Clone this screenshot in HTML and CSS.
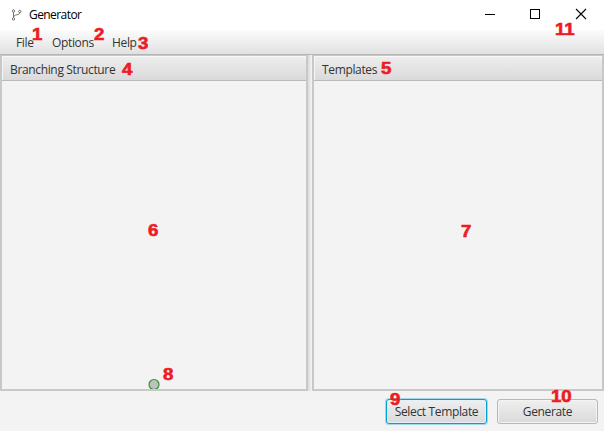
FILE: index.html
```html
<!DOCTYPE html>
<html lang="en">
<head>
<meta charset="utf-8">
<title>Generator</title>
<link rel="stylesheet" href="styles.css">
</head>
<body>
<div class="window">
  <header class="titlebar">
    <svg class="app-icon" width="12" height="12" viewBox="0 0 12 12"><g fill="none" stroke="#666" stroke-width=".9"><circle cx="2.500" cy="2" r="1.200"/><circle cx="2.500" cy="10" r="1.200"/><circle cx="8.800" cy="2.500" r="1.200"/><path d="M2.500 3.200v5.600M8.800 3.700C8.800 6.500 3 5 2.700 8"/></g></svg>
    <span class="title">Generator</span>
    <div class="controls">
      <svg width="46" height="29" viewBox="0 0 46 29"><path d="M18 14.500h10" stroke="#000"/></svg>
      <svg width="46" height="29" viewBox="0 0 46 29"><rect x="17.500" y="9.500" width="9" height="9" fill="none" stroke="#000"/></svg>
      <svg width="45" height="29" viewBox="0 0 45 29"><path d="M17 9l10 10M27 9L17 19" stroke="#000" stroke-width="1.100"/></svg>
    </div>
  </header>
  <nav class="menubar"><span class="m-file">File</span><span class="m-options">Options</span><span class="m-help">Help</span></nav>
  <main class="split">
    <section class="pane left">
      <h2>Branching Structure</h2>
      <div class="canvas"><svg width="12" height="11" viewBox="0 0 12 11"><circle cx="6" cy="6.500" r="5" fill="#c0c0c0" stroke="#2f942f" stroke-width="1.200"/></svg></div>
    </section>
    <div class="divider"></div>
    <section class="pane right">
      <h2>Templates</h2>
      <div class="canvas"></div>
    </section>
  </main>
  <footer class="actions">
    <button class="focused">Select Template</button>
    <button>Generate</button>
  </footer>
  <b class="mark n1">1</b><b class="mark n2">2</b><b class="mark n3">3</b><b class="mark n4">4</b>
  <b class="mark n5">5</b><b class="mark n6">6</b><b class="mark n7">7</b><b class="mark n8">8</b>
  <b class="mark n9">9</b><b class="mark n10">10</b><b class="mark n11">11</b>
</div>
</body>
</html>
```
FILE: styles.css
```css
* { box-sizing: border-box; }
body { margin: 0; font: 12px/16px "Open Sans", "Noto Sans", sans-serif; letter-spacing: -.35px; color: #333; }
.window { position: relative; width: 604px; height: 431px; display: flex; flex-direction: column; background: #f3f3f3; overflow: hidden; }
.titlebar { height: 30px; display: flex; align-items: center; background: #fff; color: #000; padding-left: 11px; }
.app-icon { margin-right: 6px; }
.title { font-size: 12px; letter-spacing: -.57px; }
.controls { display: flex; margin-left: auto; height: 29px; align-self: flex-start; }
.menubar { height: 25px; display: flex; align-items: center; padding: 2px 0 0 16px; background: linear-gradient(#fcfcfc, #e1e1e1); border-bottom: 1px solid #b5b5b5; }
.m-file { width: 36px; }
.m-options { width: 60px; }
.split { height: 336px; display: flex; }
.pane { display: flex; flex-direction: column; border: 2px solid #c8c8c8; border-top-width: 1px; }
.left { width: 308px; }
.right { width: 292px; }
.divider { width: 4px; background: linear-gradient(90deg, #dadada, #f5f5f5); }
h2 { margin: 0; height: 25px; padding: 6px 8px 0; font-size: 12px; font-weight: 400; line-height: 16px; background: linear-gradient(#eee, #dadada); border-bottom: 1px solid #b9b9b9; box-shadow: inset 0 1px #fafafa, inset 1px 0 #f5f5f5; border-radius: 3px 3px 0 0; }
.canvas { flex: 1; display: flex; align-items: flex-end; justify-content: center; background: #f3f3f3; }
.canvas svg { display: block; }
.actions { flex: 1; display: flex; gap: 10px; justify-content: flex-end; align-items: flex-start; padding: 8px 6px 0 0; }
button { width: 101px; height: 25px; padding: 1px 0 0; border: 1px solid #b8b8b8; border-radius: 3px; background: linear-gradient(#efefef, #dadada); box-shadow: inset 0 0 0 1px #f4f4f4; font: inherit; letter-spacing: inherit; color: #333; white-space: nowrap; }
.focused { border-color: #039ed3; box-shadow: 0 0 0 1px #a3d7e9, inset 0 0 0 1px #e5f1f5; }
.mark { position: absolute; font: 700 16.500px/16px "Liberation Sans", Arial, sans-serif; letter-spacing: 0; color: #ed1c24; -webkit-text-stroke: .6px #ed1c24; transform: scaleX(1.130); transform-origin: 0 0; }
.n1 { left: 32px; top: 26px; }
.n2 { left: 94px; top: 26px; }
.n3 { left: 138px; top: 35px; }
.n4 { left: 122px; top: 61px; }
.n5 { left: 381px; top: 60px; }
.n6 { left: 148px; top: 222px; }
.n7 { left: 461px; top: 223px; }
.n8 { left: 163px; top: 366px; }
.n9 { left: 390px; top: 391px; }
.n10 { left: 551px; top: 388px; }
.n11 { left: 555px; top: 21px; }
```
